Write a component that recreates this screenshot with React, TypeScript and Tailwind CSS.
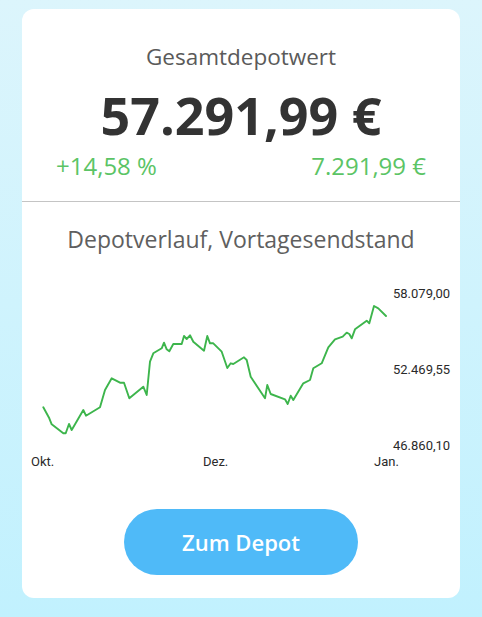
import React from "react";

const points = [
  [43.3, 407.3], [49.3, 418.3], [51.7, 424.3], [63.3, 433.3], [65.7, 433.3], [69, 424],
  [71.7, 430], [83.3, 410], [86, 415.7], [100, 407.3], [105, 390], [111.7, 378.3],
  [120, 382.7], [124, 382.7], [129.3, 398.3], [143.3, 386.7], [146.7, 395], [150, 361.7],
  [153.3, 353.3], [161.7, 348.3], [164, 342.7], [166.7, 349.3], [169.3, 351.3], [173.3, 344],
  [181.7, 344], [184, 336], [186.7, 339], [190, 335.3], [193.3, 341.7], [204, 350.7],
  [207.3, 336], [210, 343.3], [213.3, 343.3], [221.7, 351.7], [227.3, 368], [230.7, 363.3],
  [233.3, 364], [244, 357.3], [246.7, 360], [250.7, 376.7], [265, 398.3], [267.3, 385],
  [270.7, 394], [285, 399.3], [287.7, 404], [290.7, 395.7], [293.3, 400], [303.3, 383.3],
  [310, 380], [313.3, 368.3], [321.7, 363.3], [328.3, 347.3], [335, 339.3], [342.7, 336.7],
  [346.7, 332.7], [349.3, 334], [351.7, 338.3], [355, 329.3], [366.7, 320.7], [369.3, 323.3],
  [374, 306], [378.3, 308.3], [386, 316],
];

const App = () => {
  return (
    <div className="min-h-screen bg-linear-to-b from-[#dcf5fc] to-[#c1f1fe] px-[22px] pt-[9px] pb-[20px]">
      <div className="bg-white rounded-[12px] pt-[34px] pb-[23px] flex flex-col font-['Open_Sans',sans-serif]">
        <p className="text-center text-[22.5px] leading-[28px] text-[#5a5a5a]">Gesamtdepotwert</p>
        <p className="mt-[14px] text-center text-[52px] leading-[60px] font-bold text-[#333333]">57.291,99 €</p>
        <div className="mt-[6px] px-[34px] flex justify-between text-[24px] leading-[30px] text-[#5bc465]">
          <span>+14,58 %</span>
          <span>7.291,99 €</span>
        </div>
        <div className="mt-[20px] h-px bg-[#c4c4c4]" />
        <p className="mt-[23px] text-center text-[23px] leading-[28px] text-[#5f5f5f]">Depotverlauf, Vortagesendstand</p>

        <div className="mt-[32px] flex font-['Roboto',sans-serif] text-[13px] text-[#2a2a2a]">
          <svg width="368" height="170" viewBox="22 285 368 170" className="shrink-0">
            <polyline
              points={points.map((p) => p.join(",")).join(" ")}
              fill="none"
              stroke="#3db54c"
              strokeWidth="1.9"
              strokeLinejoin="round"
              strokeLinecap="round"
            />
          </svg>
          <div className="ml-[3px] h-[170px] flex flex-col justify-between leading-[18px]">
            <span>58.079,00</span>
            <span>52.469,55</span>
            <span>46.860,10</span>
          </div>
        </div>
        <div className="-mt-[2px] pl-[9px] grid grid-cols-[172px_171px_auto] font-['Roboto',sans-serif] text-[13px] leading-[18px] text-[#2a2a2a]">
          <span>Okt.</span>
          <span>Dez.</span>
          <span>Jan.</span>
        </div>

        <div className="mt-[38px] flex justify-center">
          <button className="w-[234px] h-[66px] rounded-full bg-[#4fbaf8] text-white text-[22px] font-semibold">
            Zum Depot
          </button>
        </div>
      </div>
    </div>
  );
};

export default App;
